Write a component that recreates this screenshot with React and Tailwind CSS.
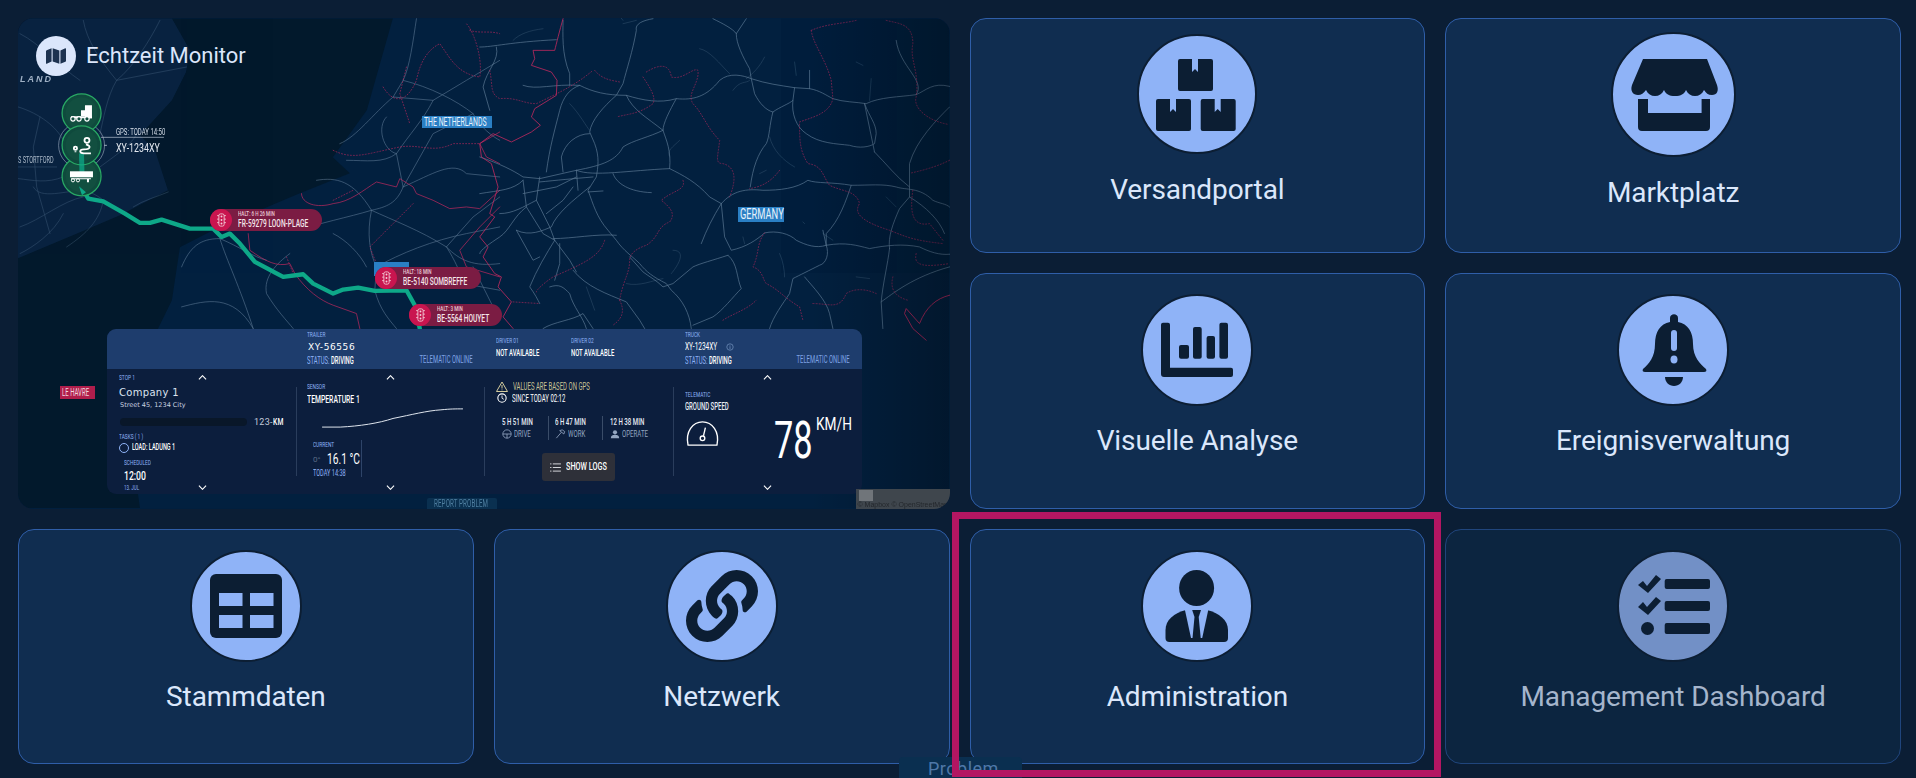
import React from "react";
import { FaLink, FaMap } from "react-icons/fa";

const roadsEast = [
"M520 55 C490 60 465 70 470 90 C460 150 440 210 430 250 L410 285 C370 320 335 360 330 395 L345 430 C360 470 355 500 350 530 L325 570 C340 610 350 650 385 690 L410 720 C430 750 460 770 480 790 C500 815 520 830 560 850 L575 870 C610 900 630 940 635 985",
"M130 255 C170 270 220 250 300 255 C340 275 380 285 440 285 C490 300 540 310 590 295 C640 300 680 290 720 240 C750 215 790 225 815 235 C860 250 900 255 945 262 L990 265 C1020 270 1040 285 1060 295 C1090 305 1130 305 1160 310 C1200 290 1260 290 1310 283 C1340 270 1360 245 1410 258",
"M700 55 C730 70 760 85 770 100 C770 130 790 170 810 205 L815 235 L825 280 C840 310 860 330 880 335 C870 370 870 410 860 430 C835 460 820 500 812 560",
"M800 55 L770 100",
"M0 470 C60 490 100 510 130 530 L180 535 L290 510 C340 530 450 510 570 505 C610 525 650 545 690 590 L725 610 C700 650 680 690 665 730",
"M725 610 C760 570 800 565 850 570 C900 570 950 565 985 540 C1010 550 1060 545 1115 555 C1170 555 1210 550 1250 560 C1280 570 1320 560 1360 600 C1380 610 1400 610 1410 620",
"M725 610 L735 710 L755 750 C800 740 830 720 855 698 C890 690 930 700 950 720 C980 735 1010 745 1040 735 C1100 725 1130 735 1170 745 C1220 735 1270 730 1320 740 C1350 755 1380 765 1410 762",
"M745 765 C700 780 660 790 640 800 L580 850 L550 860 C530 840 510 830 490 815 L450 770",
"M745 765 C775 790 770 830 785 865 C760 890 730 930 700 950 L640 975",
"M1040 735 C1050 760 1040 790 1020 795 C990 810 960 825 940 835 L930 880 C910 910 880 950 870 985",
"M975 830 C1000 860 1040 900 1050 940 L1060 985",
"M1115 555 C1100 600 1080 660 1040 700 L1040 735",
"M1230 745 C1225 790 1210 850 1205 905 L1210 985",
"M1205 905 C1240 880 1300 830 1410 800",
"M1185 455 C1220 490 1250 530 1290 560 L1290 590 L1260 625 C1240 670 1225 710 1230 745",
"M1410 320 C1370 360 1310 420 1290 490 L1290 560",
"M940 300 C935 340 950 380 980 400 C1020 430 1070 430 1110 435 C1140 445 1170 440 1185 430 L1190 400 C1190 370 1170 350 1155 310",
"M945 262 L940 300 C930 310 900 320 880 335",
"M990 210 L990 265",
"M550 390 C510 410 460 420 430 440 C410 480 370 495 290 510",
"M590 295 C570 330 550 370 550 390 C560 420 575 450 570 505",
"M440 285 C460 330 500 350 550 390",
"M300 255 C270 265 250 290 240 330 C225 390 210 440 200 515",
"M250 60 C250 100 245 160 270 220 L270 255",
"M330 400 C290 400 255 430 245 470 L250 515",
"M0 580 C60 570 100 570 130 540",
"M130 540 L140 620 L190 700 L225 720 L270 780 L290 815",
"M180 530 L170 600 L210 680 L225 720",
"M180 545 C230 540 280 535 340 530",
"M140 620 C100 650 90 690 60 710 C30 730 0 750 0 760",
"M330 560 C280 600 230 640 215 680 C190 690 150 710 110 690",
"M220 715 C280 715 350 700 410 705",
"M225 720 C200 760 170 810 150 860 C165 880 175 900 180 910",
"M240 730 L240 790 L225 840",
"M325 575 L370 572",
"M290 510 L295 570",
"M170 600 C130 620 100 640 60 640",
"M280 810 C320 860 380 880 440 905 L480 960 L495 985",
"M190 985 C220 965 280 960 310 940 L340 985",
"M210 860 C240 850 250 860 270 880 C280 920 310 950 320 985",
"M110 690 L160 780 L180 770",
"M400 520 C410 550 450 575 515 577",
"M130 580 L230 560 L290 530",
"M200 640 L250 600 L280 560",
"M0 140 C40 140 90 125 230 118",
"M50 140 C60 180 20 210 10 260 L30 330",
"M1250 120 C1260 200 1340 240 1310 283",
"M1155 310 L1185 455",
"M1030 690 L1040 735",
"M1290 590 C1340 620 1380 660 1395 700",
];
const roadsMinor = [
"M660 145 C690 150 720 190 750 220","M855 170 C840 200 820 220 800 235","M760 270 C780 240 800 250 810 240","M1175 235 L1170 300","M945 185 L950 225",
"M270 310 C300 340 320 380 330 390","M600 420 C580 440 560 450 570 470","M870 410 C880 450 910 480 945 500","M1130 185 L1150 195","M430 70 L470 60",
"M580 750 C620 750 600 790 575 820","M900 760 C910 780 915 810 915 830","M440 850 C480 860 520 840 550 835","M320 860 L345 930","M1130 830 L1170 835",
"M790 710 L795 730","M860 510 L840 520","M970 665 L975 670","M100 120 C120 100 150 90 190 85","M390 10 L430 60","M1030 700 L1060 720","M1220 590 L1250 620",
];
const roadsWest = [
"M55 320 C120 340 170 380 190 420","M55 535 C100 540 140 550 190 530","M55 500 L170 500","M190 540 C230 560 290 580 310 600 L380 640",
"M100 560 C120 600 200 570 250 570","M120 350 L100 440 L110 560 L150 700","M480 60 C450 120 400 200 350 240 C320 290 310 360 300 400",
"M250 60 C260 120 300 180 350 240","M60 100 C120 130 180 200 240 240","M350 240 L560 200","M300 500 C340 470 400 430 410 400",
"M310 600 C300 660 260 700 200 740","M60 680 C120 660 190 600 250 590","M60 760 C100 740 160 700 190 640","M400 620 C430 600 470 590 505 575",
];
const roadsCentral = [
"M545 800 C570 740 600 715 660 715 C720 740 760 770 800 780","M660 715 C680 780 720 860 760 985","M870 760 C830 790 790 830 800 880 C830 930 860 960 880 985",
"M1115 630 C1100 700 1110 760 1130 800 L1125 870 C1140 930 1170 960 1190 985","M900 690 C950 670 1050 650 1115 630 C1160 620 1190 610 1210 560 L1190 460 C1150 450 1130 380 1160 350",
"M1210 560 C1300 520 1360 480 1400 520 L1500 530","M1130 800 C1200 760 1300 720 1400 700 L1500 680","M1115 630 C1180 660 1260 690 1340 740 C1380 780 1420 800 1500 790",
"M1000 700 C1040 720 1080 760 1100 800","M1020 430 C1070 410 1120 340 1180 290 L1210 240 C1230 200 1240 120 1250 55","M1180 290 L1300 300 L1400 240 L1500 180",
"M1210 240 C1290 260 1370 300 1420 340 C1440 380 1480 410 1500 420","M1300 300 C1270 360 1230 400 1190 460","M1210 560 L1300 400 L1420 340","M1040 480 C1100 480 1150 490 1190 460",
"M950 540 C1010 530 1060 540 1115 630","M1180 840 C1240 850 1320 880 1390 850 L1500 870","M1390 850 C1380 800 1340 740 1340 740","M1340 740 L1420 650 L1500 590","M1420 800 L1500 960",
"M545 920 C620 900 700 880 760 985",
];
const dottedEast = [
"M995 90 C1040 70 1090 70 1130 60 M1220 60 C1260 70 1300 70 1300 130 C1290 180 1320 210 1310 290 C1300 320 1340 360 1405 372",
"M995 90 C1000 130 1040 180 1055 240 L1060 295 C1050 340 1000 350 960 365 C960 420 960 450 985 490 C1030 495 1030 530 1050 555 C1090 575 1130 570 1140 610 C1120 640 1150 665 1230 690 C1280 710 1300 720 1390 730",
"M1410 480 C1370 500 1330 510 1295 518",
"M500 215 C540 190 570 190 575 230 C610 240 640 200 655 210 C660 250 620 280 640 310 C670 340 680 380 720 420 C715 470 705 490 730 490 C770 500 770 540 750 590",
"M490 230 C510 260 530 290 520 310 C480 340 450 340 410 350",
"M345 210 C370 240 400 240 420 245",
"M30 210 C40 260 30 280 60 295 C110 290 130 310 170 310 C230 280 280 260 340 210",
"M610 540 C620 570 580 570 545 600 C570 620 590 640 570 665 C530 680 540 710 500 735 C470 745 450 760 450 780 C450 820 430 840 420 900",
"M375 720 C360 770 310 790 220 830 C190 850 170 870 170 875",
"M855 698 C830 730 840 760 820 800 C850 810 850 840 860 850 C900 870 910 890 960 920 L970 960 M1000 910 C1050 910 1080 930 1100 880 C1130 860 1170 870 1190 880",
"M1300 570 C1290 640 1300 680 1350 670 L1390 720",
"M1240 830 C1230 870 1250 890 1285 900 M1310 760 C1300 800 1340 800 1410 790",
"M420 900 C440 940 420 960 400 975","M100 905 L180 910","M730 960 C760 940 800 930 830 900",
"M900 510 C870 550 840 560 810 565",
];
const dottedCentral = [
"M1150 260 C1180 310 1220 310 1250 240 C1260 190 1280 150 1320 130 C1350 170 1370 220 1440 230 C1450 170 1420 90 1400 70",
"M1000 450 C1060 480 1100 460 1200 440 C1260 430 1300 460 1360 430 L1440 430","M1000 600 L1060 570","M1410 90 C1440 100 1470 90 1500 100","M1240 610 L1110 740 L1130 790","M860 770 L880 820","M1220 200 L1200 280 L1230 370",
];
const solidEast = [
"M250 55 C240 90 230 130 225 150 L160 150 L165 175 L155 195 L215 215 L232 240 L230 285 L165 325 L155 350 L182 375 L155 395 L95 425 L40 400 L0 430 L5 470 L35 490 L55 560 L30 640 L45 650 L0 710 L25 740 L10 770 L45 820 L65 830 L55 860 L95 905 L70 950 L100 985",
"M1410 885 C1370 895 1340 920 1320 970 L1280 925 L1275 940 L1300 985 L1340 1020",
];
const solidCentral = [
"M905 580 C905 610 950 625 1000 610 C1050 605 1090 570 1130 545 L1190 560 L1200 535 L1240 560 L1250 580 L1300 600 L1350 625 L1400 620 L1440 625 L1500 570",
"M1500 395 L1440 430 L1460 470 L1500 490","M1500 620 L1440 680 L1380 750 L1400 800 L1500 830",
"M745 700 L750 750 C800 785 830 800 870 790 L885 820 C920 870 960 900 1000 915 L1070 940 L1080 985",
];

const P = ({ list, ...rest }) => <g fill="none" strokeLinecap="round" strokeLinejoin="round" {...rest}>{list.map((d, i) => <path key={i} d={d} />)}</g>;

function MapArt() {
  return (
    <svg viewBox="0 0 932 490" className="absolute inset-0 w-full h-full">
      <defs>
        <linearGradient id="edge" x1="0" x2="1" y1="0" y2="0">
          <stop offset="0.85" stopColor="#000" stopOpacity="0" />
          <stop offset="1" stopColor="#000" stopOpacity="0.28" />
        </linearGradient>
      </defs>
      <rect width="932" height="490" fill="#02203f" />
      <g transform="translate(-18,-18)">
        <path d="M18 18 L393 18 L367 110 L333 157 L350 173 L300 193 L267 207 L213 230 L180 247 L172 300 L150 345 L125 400 L140 508 L18 508 Z" fill="#02192c" />
        <path d="M18 18 L172 18 L190 50 L186 72 L172 100 L140 135 L155 150 L168 190 L120 215 L80 232 L18 258 Z" fill="#092341" />
        <g transform="scale(0.33333)">
          <P list={roadsWest} stroke="#5c7a98" strokeWidth="1.8" opacity=".5" />
          <P list={roadsCentral} stroke="#7d99b3" strokeWidth="2" opacity=".65" />
          <P list={dottedCentral} stroke="#c7295f" strokeWidth="2.6" strokeDasharray="3 6" opacity=".7" />
          <P list={solidCentral} stroke="#c7295f" strokeWidth="2.4" opacity=".85" />
          <g transform="translate(1440,0)">
            <P list={roadsMinor} stroke="#587792" strokeWidth="1.6" opacity=".55" />
            <P list={roadsEast} stroke="#7d99b3" strokeWidth="2.1" opacity=".72" />
            <P list={dottedEast} stroke="#c7295f" strokeWidth="2.6" strokeDasharray="3 6" opacity=".65" />
            <P list={solidEast} stroke="#c7295f" strokeWidth="2.6" opacity=".9" />
          </g>
        </g>
        <rect x="18" y="18" width="932" height="490" fill="url(#edge)" />
        <g transform="scale(0.33333)">
          <path d="M245 460 L250 570 L265 595 L310 603 L375 640 L420 668 L450 668 L485 658 L570 685 L640 685 L665 710 L690 700 L720 730 L765 785 L850 830 L910 822 L940 850 L1000 880 L1030 868 L1075 862 L1125 872 L1220 870 L1245 915 L1260 985" fill="none" stroke="#0ea888" strokeWidth="13" strokeLinejoin="round" strokeLinecap="round" />
        </g>
        <circle cx="81.6" cy="145" r="23" fill="none" stroke="#8a9bb0" strokeWidth="1" opacity=".7" />
        <path d="M104 145 H107" stroke="#9ab" strokeWidth="1" />
        <path d="M101 137 H164" stroke="#b8c4d2" strokeWidth=".7" />
        {[113, 176, 145].map((cy) => (
          <g key={cy}>
            <circle cx="81.6" cy={cy} r="19.5" fill="#0f4a3d" stroke="#29a864" strokeWidth="1.3" />
            <circle cx="81.6" cy={cy} r="16" fill="#124f40" />
          </g>
        ))}
        <path d="M79 153 L79.5 172 L84.5 172 L84 153Z" fill="#0ea888" opacity=".75" />
        <path d="M79 186 L82 195 L86 192Z" fill="#0ea888" />
        <g fill="#fff">
          <path d="M85 105 h7 v13 h-7z M81 110 h5 v6 h-5z" />
          <path d="M71 116 h21 v2 h-21z" />
          <circle cx="73" cy="118.5" r="2.2" fill="#124f40" stroke="#fff" strokeWidth="1.2" />
          <circle cx="79" cy="118.5" r="2.2" fill="#124f40" stroke="#fff" strokeWidth="1.2" />
          <circle cx="87" cy="118.5" r="2.2" fill="#124f40" stroke="#fff" strokeWidth="1.2" />
        </g>
        <g fill="none" stroke="#fff" strokeWidth="1.8">
          <circle cx="87" cy="140" r="2.5" />
          <path d="M86 144 C92 146 90 149 84 149 C79 149 79 153 84 153 H91" />
          <circle cx="75.5" cy="148" r="1.6" />
          <path d="M75.5 151 L75.5 152" />
        </g>
        <g fill="#fff">
          <rect x="70" y="171" width="23" height="6" />
          <path d="M71 178 h15 v1 h-15z M85 178 h6 v1 h-2 v3 h-2 v-3 h-2z" />
          <circle cx="73" cy="180" r="1.6" fill="none" stroke="#fff" strokeWidth="1" />
          <circle cx="78" cy="180" r="1.6" fill="none" stroke="#fff" strokeWidth="1" />
        </g>
      </g>
    </svg>
  );
}

function Txt({ className = "", sx = "scale-x-[0.6]", org = "origin-left", children }) {
  return <span className={`block whitespace-nowrap uppercase font-['Roboto',sans-serif] ${sx} ${org} ${className}`}>{children}</span>;
}

function Pill({ left, top, width, small, big }) {
  return (
    <div className="absolute h-[22px] rounded-full bg-[#7b1c43] flex items-center" style={{ left, top, width }}>
      <div className="w-[22px] h-[22px] rounded-full bg-[#c9154f] flex items-center justify-center shrink-0">
        <svg viewBox="0 0 12 16" className="w-[11px] h-[14px]">
          <rect x="3" y="1" width="6" height="14" rx="2" fill="none" stroke="#f3cfd9" strokeWidth="1" />
          <circle cx="6" cy="4" r="1.1" fill="#f3cfd9" /><circle cx="6" cy="8" r="1.1" fill="#f3cfd9" /><circle cx="6" cy="12" r="1.1" fill="#f3cfd9" />
          <path d="M3 3 H1 M3 7 H1 M3 11 H1 M9 3 H11 M9 7 H11 M9 11 H11" stroke="#f3cfd9" strokeWidth="1" />
        </svg>
      </div>
      <div className="ml-[6px] flex flex-col w-0">
        <Txt className="text-[7px] leading-[8px] font-medium text-[#e8c9d3]" sx="scale-x-[0.66]">{small}</Txt>
        <Txt className="text-[11px] leading-[12px] font-medium text-[#f4e6ea]" sx="scale-x-[0.6]">{big}</Txt>
      </div>
    </div>
  );
}

const Chevron = ({ down, cls }) => (
  <svg viewBox="0 0 12 7" className={`absolute w-[9px] h-[5px] ${cls}`}>
    <path d={down ? "M1 1 L6 6 L11 1" : "M1 6 L6 1 L11 6"} fill="none" stroke="#fff" strokeWidth="1.6" />
  </svg>
);

function Panel() {
  const lab = "text-[8px] leading-[10px] text-[#8fb3f7]";
  return (
    <div className="absolute left-[89px] top-[311px] w-[755px] h-[165px] rounded-[9px] overflow-hidden bg-[#0c1e3d] flex flex-col">
      <div className="h-[40px] bg-[#1e3d6d] flex shrink-0">
        <div className="w-[200px] shrink-0" />
        <div className="w-[166px] shrink-0 flex flex-col pt-[1px] relative">
          <Txt className={lab}>Trailer</Txt>
          <span className="text-[9px] leading-[14px] font-['DejaVu_Sans',sans-serif] text-white ml-[1px] tracking-[0.6px]">XY-56556</span>
          <Txt className="text-[10.5px] leading-[13px] text-[#8fb3f7]" sx="scale-x-[0.56]">Status: <b className="text-white font-medium">Driving</b></Txt>
          <span className="absolute right-0 bottom-[3px]"><Txt className="text-[10.5px] leading-[13px] text-[#7fa3e6]" sx="scale-x-[0.56]" org="origin-right">Telematic online</Txt></span>
        </div>
        <div className="w-[23px] shrink-0" />
        <div className="w-[75px] shrink-0 pt-[7px]">
          <Txt className={lab}>Driver 01</Txt>
          <Txt className="text-[9.5px] leading-[14px] text-white font-medium" sx="scale-x-[0.62]">Not available</Txt>
        </div>
        <div className="w-[114px] shrink-0 pt-[7px]">
          <Txt className={lab}>Driver 02</Txt>
          <Txt className="text-[9.5px] leading-[14px] text-white font-medium" sx="scale-x-[0.62]">Not available</Txt>
        </div>
        <div className="w-[165px] shrink-0 flex flex-col pt-[1px] relative">
          <Txt className={lab}>Truck</Txt>
          <div className="flex items-center h-[14px]">
            <Txt className="text-[10.5px] leading-[14px] text-white w-[39px]" sx="scale-x-[0.62]">XY-1234XY</Txt>
            <svg viewBox="0 0 10 10" className="w-[8px] h-[8px] ml-[2px]"><circle cx="5" cy="5" r="4" fill="none" stroke="#6c8bb8" /><path d="M5 4 V7.5 M5 2.5 V3.2" stroke="#6c8bb8" /></svg>
          </div>
          <Txt className="text-[10.5px] leading-[13px] text-[#8fb3f7]" sx="scale-x-[0.56]">Status: <b className="text-white font-medium">Driving</b></Txt>
          <span className="absolute right-0 bottom-[3px]"><Txt className="text-[10.5px] leading-[13px] text-[#7fa3e6]" sx="scale-x-[0.56]" org="origin-right">Telematic online</Txt></span>
        </div>
      </div>
      <div className="flex-1 grid grid-cols-[189px_188px_189px_189px] relative">
        <Chevron cls="left-[91px] top-[6px]" />
        <Chevron cls="left-[279px] top-[6px]" />
        <Chevron cls="left-[656px] top-[6px]" />
        <Chevron down cls="left-[91px] top-[116px]" />
        <Chevron down cls="left-[279px] top-[116px]" />
        <Chevron down cls="left-[656px] top-[116px]" />

        <div className="pl-[12px] pt-[4px] relative">
          <Txt className={lab}>Stop 1</Txt>
          <div className="text-[10px] leading-[14px] mt-[3px] text-[#dbe3f0] font-['DejaVu_Sans',sans-serif] tracking-[0.3px] whitespace-nowrap">Company 1</div>
          <div className="text-[6.5px] leading-[10px] text-[#c9d2e0] font-['DejaVu_Sans',sans-serif] ml-[1px] whitespace-nowrap">Street 45, 1234 City</div>
          <div className="flex items-center mt-[7px] ml-[1px]">
            <div className="w-[127px] h-[8px] rounded-full bg-[#091729]" />
            <span className="text-[9px] leading-[10px] ml-[7px] text-[#c2cbd9] font-['Roboto',sans-serif] whitespace-nowrap tracking-[0.3px]">123-<b className="font-medium text-white scale-x-75 inline-block origin-left">KM</b></span>
          </div>
          <Txt className={`${lab} mt-[5px]`}>Tasks ( 1 )</Txt>
          <div className="flex items-center">
            <span className="w-[10px] h-[10px] rounded-full border-[1.5px] border-[#8fb3f7] shrink-0" />
            <Txt className="text-[9px] leading-[11px] text-white font-medium ml-[3px] w-0" sx="scale-x-[0.62]">Load: Ladung 1</Txt>
          </div>
          <div className="pl-[5px] mt-[5px]">
            <Txt className={lab}>Scheduled</Txt>
            <Txt className="text-[12px] leading-[14px] mt-[1px] text-white font-medium" sx="scale-x-[0.72]">12:00</Txt>
            <Txt className="text-[7.5px] leading-[9px] text-[#8fb3f7]">13. Jul</Txt>
          </div>
        </div>

        <div className="relative pl-[11px] pt-[13px]">
          <div className="absolute left-0 top-[18px] h-[89px] w-px bg-[#2a3d5c]" />
          <Txt className={lab}>Sensor</Txt>
          <Txt className="text-[10px] leading-[13px] mt-[1px] text-white font-medium" sx="scale-x-[0.68]">Temperature 1</Txt>
          <svg viewBox="0 0 150 24" className="w-[148px] h-[23px] ml-[12px] block">
            <path d="M1 22 L20 22 C40 21 60 18 75 13 C95 9 110 5 125 4 C135 3 140 3 148 3" fill="none" stroke="#e8edf5" strokeWidth="1" />
          </svg>
          <div className="flex mt-[11px]">
            <div className="w-[49px] h-[37px] border-r border-[#2e4468] ml-[6px] shrink-0">
              <Txt className={lab}>Current</Txt>
              <div className="flex items-center h-[15px] mt-[2px]">
                <span className="text-[8px] w-[9px] shrink-0 text-[#5a6b85] font-['Roboto',sans-serif]">0°</span>
                <Txt className="text-[15px] leading-[15px] text-white ml-[5px] w-0" sx="scale-x-[0.68]">16.1 °C</Txt>
              </div>
              <Txt className="text-[9px] leading-[10px] mt-[1px] text-[#8fb3f7]" sx="scale-x-[0.62]">Today 14:38</Txt>
            </div>
          </div>
        </div>

        <div className="relative pl-[12px] pt-[11px]">
          <div className="absolute left-0 top-[18px] h-[89px] w-px bg-[#2a3d5c]" />
          <div className="flex items-center h-[12px]">
            <svg viewBox="0 0 12 11" className="w-[12px] h-[11px] shrink-0"><path d="M6 1 L11.5 10.5 H.5Z" fill="none" stroke="#d5cd9e" strokeWidth="1" /><path d="M6 4 V7.5 M6 8.5 V9.3" stroke="#d5cd9e" /></svg>
            <Txt className="text-[10px] leading-[11px] text-[#c9c296] ml-[5px] w-0" sx="scale-x-[0.6]">Values are based on GPS</Txt>
          </div>
          <div className="flex items-center h-[12px]">
            <svg viewBox="0 0 12 12" className="w-[10px] h-[10px] shrink-0 ml-[1px]"><circle cx="6" cy="6" r="5" fill="none" stroke="#fff" strokeWidth="1.3" /><path d="M6 3 V6.3 L8.2 7.6" fill="none" stroke="#fff" /></svg>
            <Txt className="text-[10px] leading-[11px] text-white ml-[5px] w-0" sx="scale-x-[0.6]">Since today 02:12</Txt>
          </div>
          <div className="flex mt-[12px] ml-[6px]">
            <div className="w-[47px] h-[24px] border-r border-[#3a4c68] shrink-0">
              <Txt className="text-[9px] leading-[12px] text-[#e8edf5] font-medium" sx="scale-x-[0.68]">5 H 51 Min</Txt>
              <div className="flex items-center h-[12px]">
                <svg viewBox="0 0 12 12" className="w-[10px] h-[10px] shrink-0"><circle cx="6" cy="6" r="5" fill="none" stroke="#93a5c0" /><path d="M1 6 H11 M6 6 V11" stroke="#93a5c0" /></svg>
                <Txt className="text-[9px] leading-[10px] text-[#93a5c0] ml-[2px] w-0" sx="scale-x-[0.68]">Drive</Txt>
              </div>
            </div>
            <div className="w-[54px] h-[24px] border-r border-[#3a4c68] pl-[6px] shrink-0">
              <Txt className="text-[9px] leading-[12px] text-[#e8edf5] font-medium" sx="scale-x-[0.68]">6 H 47 Min</Txt>
              <div className="flex items-center h-[12px]">
                <svg viewBox="0 0 12 12" className="w-[11px] h-[10px] shrink-0"><path d="M1 11 L7 4 M5 2 L10 6 L11 3 L8 1Z" fill="none" stroke="#93a5c0" /></svg>
                <Txt className="text-[9px] leading-[10px] text-[#93a5c0] ml-[2px] w-0" sx="scale-x-[0.68]">Work</Txt>
              </div>
            </div>
            <div className="pl-[7px] w-[60px]">
              <Txt className="text-[9px] leading-[12px] text-[#e8edf5] font-medium" sx="scale-x-[0.68]">12 H 38 Min</Txt>
              <div className="flex items-center h-[12px]">
                <svg viewBox="0 0 12 12" className="w-[10px] h-[10px] shrink-0"><circle cx="6" cy="4" r="2.5" fill="#93a5c0" /><path d="M1 11 C1 8 3 7 6 7 C9 7 11 8 11 11Z" fill="#93a5c0" /></svg>
                <Txt className="text-[9px] leading-[10px] text-[#93a5c0] ml-[2px] w-0" sx="scale-x-[0.68]">Operate</Txt>
              </div>
            </div>
          </div>
          <div className="mt-[13px] ml-[46px] w-[73px] h-[28px] rounded-[3px] bg-[#2e3039] flex items-center pl-[8px]">
            <svg viewBox="0 0 12 10" className="w-[11px] h-[9px] shrink-0"><path d="M3 1 H12 M3 5 H12 M3 9 H12" stroke="#e5e7eb" /><path d="M0 1 H1.5 M0 5 H1.5 M0 9 H1.5" stroke="#e5e7eb" /></svg>
            <Txt className="text-[11px] leading-[12px] text-white font-medium ml-[5px] w-0" sx="scale-x-[0.66]">Show logs</Txt>
          </div>
        </div>

        <div className="relative pl-[12px] pt-[21px]">
          <div className="absolute left-0 top-[18px] h-[89px] w-px bg-[#2a3d5c]" />
          <Txt className={lab}>Telematic</Txt>
          <Txt className="text-[10px] leading-[12px] mt-[1px] text-[#e8edf5] font-medium">Ground speed</Txt>
          <svg viewBox="0 0 36 28" className="w-[35px] h-[27px] mt-[7px] block">
            <path d="M3 26 C0 12 8 2 18 2 C28 2 36 12 33 26Z" fill="none" stroke="#fff" strokeWidth="1.4" strokeLinejoin="round" />
            <circle cx="18" cy="19" r="2.4" fill="none" stroke="#fff" strokeWidth="1.4" />
            <path d="M19 16.5 L21 8" stroke="#fff" strokeWidth="1.4" />
          </svg>
          <div className="absolute left-[101px] top-[49px] flex items-start">
            <Txt className="text-[52px] leading-[46px] text-white w-[42px]" sx="scale-x-[0.66]">78</Txt>
            <Txt className="text-[19px] leading-[18px] text-white -mt-[3px] w-[36px]" sx="scale-x-[0.72]">Km/h</Txt>
          </div>
        </div>
      </div>
    </div>
  );
}

function RealtimeMap() {
  return (
    <div className="col-span-2 row-span-2 relative rounded-[16px] overflow-hidden bg-[#02203f] blur-[0.4px]">
      <MapArt />
      <div className="absolute left-[18px] top-[18px] flex items-center">
        <div className="w-[40px] h-[40px] rounded-full bg-[#dbe6fb] flex items-center justify-center">
          <FaMap className="w-[20px] h-[18px] text-[#1d3250]" />
        </div>
        <span className="ml-[10px] text-[22px] leading-[26px] text-[#dbe6fb] font-['Roboto',sans-serif]">Echtzeit Monitor</span>
      </div>
      <span className="absolute left-[2px] top-[56px] text-[9px] leading-[10px] font-bold italic tracking-[2px] text-[#9fb0c4] font-['Liberation_Sans',sans-serif]">LAND</span>
      <span className="absolute left-0 top-[137px] w-[36px]"><Txt className="text-[9px] leading-[10px] text-[#aab8c8]" sx="scale-x-[0.62]">S Stortford</Txt></span>
      <span className="absolute left-[98px] top-[109px] w-[48px]"><Txt className="text-[9.5px] leading-[10px] text-[#d5dde8]" sx="scale-x-[0.63]">GPS: Today 14:50</Txt></span>
      <span className="absolute left-[98px] top-[122px] w-[44px]"><Txt className="text-[13px] leading-[16px] text-[#e4e9f0]" sx="scale-x-[0.68]">XY-1234XY</Txt></span>
      <Pill left={192} top={191} width={112} small="Halt: 6 H 26 Min" big="FR-59279 Loon-Plage" />
      <div className="absolute left-[356px] top-[244px] w-[35px] h-[14px] bg-[#2a7fc4]" />
      <Pill left={357} top={249} width={106} small="Halt: 18 Min" big="BE-5140 Sombreffe" />
      <Pill left={391} top={286} width={93} small="Halt: 3 Min" big="BE-5564 Houyet" />
      <div className="absolute left-[404px] top-[98px] w-[70px] h-[12px] bg-[#2a7fc4] pl-[2px]"><Txt className="text-[13px] leading-[12px] text-[#e8f2fb] w-0" sx="scale-x-[0.53]">The Netherlands</Txt></div>
      <div className="absolute left-[720px] top-[189px] w-[46px] h-[15px] bg-[#2a7fc4] pl-[2px]"><Txt className="text-[15px] leading-[15px] text-[#e8f2fb] w-0" sx="scale-x-[0.62]">Germany</Txt></div>
      <div className="absolute left-[42px] top-[368px] w-[35px] h-[13px] bg-[#b01e4c] pl-[2px]"><Txt className="text-[10px] leading-[13px] text-[#f0d6de] w-0" sx="scale-x-[0.6]">Le Havre</Txt></div>
      <Panel />
      <div className="absolute left-[409px] bottom-0 w-[70px] h-[11px] rounded-t-[2px] bg-[#0a3050] pl-[7px]">
        <Txt className="text-[10px] leading-[11px] text-[#4f7fa0] tracking-[0.2px] w-0" sx="scale-x-[0.62]">Report problem</Txt>
      </div>
      <div className="absolute right-0 bottom-0 w-[94px] h-[20px] bg-[#3f464d] overflow-hidden">
        <div className="absolute left-[3px] top-[1px] w-[14px] h-[11px] bg-[#70757a]" />
        <span className="absolute left-[2px] top-[12px] text-[7px] leading-[8px] whitespace-nowrap text-[#23272c] font-['Liberation_Sans',sans-serif]">© Mapbox © OpenStreetMap</span>
      </div>
    </div>
  );
}

const D = "#0c1e33";
const iconBoxes = (
  <g fill={D}>
    {[[42, 25], [20, 65], [64.7, 65]].map(([x, y]) => (
      <path key={x} d={`M${x + 1} ${y} h12 v13 l3 -3 l3 3 v-13 h13 a2 2 0 0 1 2 2 v28 a2 2 0 0 1 -2 2 h-31 a2 2 0 0 1 -2 -2 v-28 a2 2 0 0 1 2 -2z`} />
    ))}
  </g>
);
const iconShop = (
  <g fill={D}>
    <path d="M32 27 H96 L106 53 C108 59 106 63 101 63 C97 63 95 61 93 58 C91 62 88 64 84 64 C80 64 77 62 75 58 C73 62 70 64 64 64 C58 64 55 62 53 58 C51 62 48 64 44 64 C40 64 37 62 35 58 C33 61 30 63 27 63 C22 63 19 59 21 53Z" />
    <path d="M27 67 H37 V81 H90.6 V67 H99 V95 A4 4 0 0 1 95 99 H31 A4 4 0 0 1 27 95Z" />
  </g>
);
const iconChart = (
  <g fill={D}>
    <path d="M22 28.7 h5 a2 2 0 0 1 2 2 V73.7 H90 a2 2 0 0 1 2 2 V81 a2 2 0 0 1 -2 2 H23 a3 3 0 0 1 -3 -3 V30.7 a2 2 0 0 1 2 -2z" />
    <rect x="38" y="51" width="10" height="13.7" rx="2" />
    <rect x="52" y="33" width="8.7" height="31.7" rx="2" />
    <rect x="65.6" y="42" width="8.4" height="22.7" rx="2" />
    <rect x="78.4" y="28.7" width="8.6" height="36" rx="2" />
  </g>
);
const iconBell = (
  <g>
    <path fill={D} d="M53 24 C53 19 61 19 61 24 V28 C71 30 76 38 76 50 C76 63 83 70 89 75 C90 77 89 78 87 78 H28 C26 78 25 77 26 75 C32 70 38 63 38 50 C38 38 43 30 53 28Z" />
    <path fill={D} d="M48 83 H66 C66 88 62 92 57 92 C52 92 48 88 48 83Z" />
    <rect x="54" y="36" width="6" height="21" rx="3" fill="#8fb3f7" />
    <ellipse cx="57" cy="65.5" rx="3.5" ry="4" fill="#8fb3f7" />
  </g>
);
const iconTable = (
  <g>
    <rect x="20" y="24" width="72" height="64" rx="6" fill={D} />
    {[[29, 43], [60, 43], [29, 65], [60, 65]].map(([x, y]) => <rect key={x + "" + y} x={x} y={y} width="23.5" height="13" fill="#8fb3f7" />)}
  </g>
);
const iconPerson = (
  <g>
    <ellipse cx="55.6" cy="38" rx="17.5" ry="18" fill={D} />
    <path fill={D} d="M45 60 C33 63 24.5 70 24.5 80 V88 A4 4 0 0 0 28.5 92 H83 A4 4 0 0 0 87 88 V80 C87 70 78 63 66 60Z" />
    <path fill="#8fb3f7" d="M43.5 58 H50.5 L53.5 67 L51.5 88 H50 Z" />
    <path fill="#8fb3f7" d="M67.7 58 H60.7 L57.7 67 L59.7 88 H61.2 Z" />
    <path fill="#8fb3f7" d="M50 58 H61 V60 H50Z" />
  </g>
);
const iconList = (
  <g fill={D}>
    <path d="M21 35 L26 31 L30 36 L39 25 L44 29 L31 43 Z" />
    <path d="M21 57 L26 52 L30 57 L39 47 L44 51 L31 65 Z" />
    <ellipse cx="30.5" cy="78.5" rx="6.5" ry="6.5" />
    <rect x="47.7" y="29" width="45.3" height="10" rx="2" />
    <rect x="47.7" y="51" width="45.3" height="10" rx="2" />
    <rect x="47.7" y="73" width="45.3" height="11" rx="2" />
  </g>
);

function Card({ label, size = 112, pt = "pt-[20px]", mt = "mt-[14px]", icon, muted }) {
  return (
    <div className={`rounded-[16px] border flex flex-col items-center ${pt} ${muted ? "bg-[#0c2540] border-[#20457c]" : "bg-[#102d50] border-[#2f5ea8]"}`}>
      <div
        className={`rounded-full border-2 border-[#0c1e33] shrink-0 flex items-center justify-center ${muted ? "bg-[#7290c6]" : "bg-[#8fb3f7]"}`}
        style={{ width: size, height: size }}
      >
        {icon}
      </div>
      <div className={`${mt} text-[28px] leading-[42px] tracking-[-0.1px] font-['Roboto',sans-serif] ${muted ? "text-[#a5b5cc]" : "text-[#dbe7fb]"}`}>{label}</div>
    </div>
  );
}

const Svg = ({ size, children }) => (
  <svg viewBox={`0 0 ${size} ${size}`} className="shrink-0 -m-[2px]" style={{ width: size, height: size }}>{children}</svg>
);

export default function App() {
  return (
    <div className="relative w-[1916px] h-[778px] overflow-hidden bg-[#0b1e35]">
      <div className="w-[1883px] ml-[18px] pt-[18px] grid grid-cols-4 grid-rows-[235px_235.5px_235px] gap-x-[20px] gap-y-[20px]">
        <RealtimeMap />
        <Card label="Versandportal" size={120} pt="pt-[15px]" mt="mt-[15px]" icon={<Svg size={120}>{iconBoxes}</Svg>} />
        <Card label="Marktplatz" size={125} pt="pt-[13px]" mt="mt-[15px]" icon={<Svg size={125}>{iconShop}</Svg>} />
        <Card label="Visuelle Analyse" icon={<Svg size={112}>{iconChart}</Svg>} />
        <Card label="Ereignisverwaltung" icon={<Svg size={112}>{iconBell}</Svg>} />
        <Card label="Stammdaten" icon={<Svg size={112}>{iconTable}</Svg>} />
        <Card label="Netzwerk" icon={<FaLink className="w-[72px] h-[72px] text-[#0c1e33]" />} />
        <Card label="Administration" icon={<Svg size={112}>{iconPerson}</Svg>} />
        <Card label="Management Dashboard" muted icon={<Svg size={112}>{iconList}</Svg>} />
      </div>
      <div className="absolute left-[899px] top-[757px] w-[123px] h-[21px] rounded-t-[4px] bg-[#0a2f50] overflow-hidden pl-[29px] text-[18px] leading-[24px] tracking-[0.5px] text-[#4f78a8] font-['Roboto',sans-serif]">Problem</div>
      <div className="absolute left-[952px] top-[512px] w-[489px] h-[265px] border-[7px] border-[#b31662] pointer-events-none" />
    </div>
  );
}
